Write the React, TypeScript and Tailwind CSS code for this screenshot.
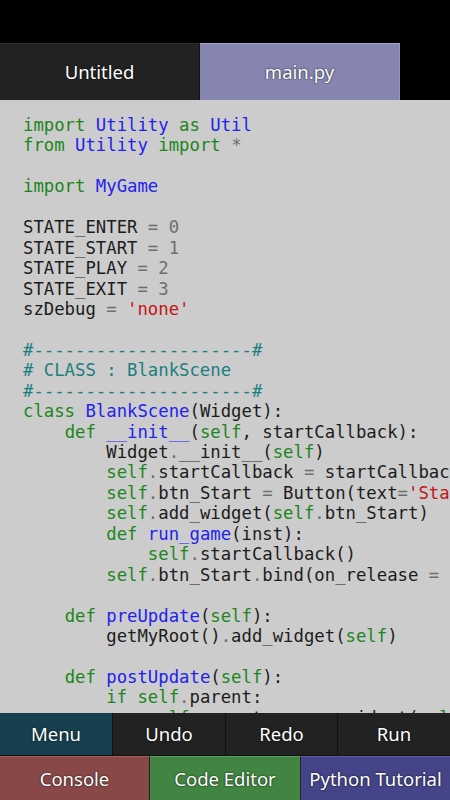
import React from "react";

type Tok = [string, string];
const G = "text-[#1c861c]";
const B = "text-[#2222ee]";
const K = "text-[#1c1c1c]";
const O = "text-[#6e6e6e]";
const C = "text-[#1a7f7f]";
const R = "text-[#c41515]";

const sp = (n: number): Tok => [" ".repeat(n), K];

const lines: Tok[][] = [
  [["import", G], sp(1), ["Utility", B], sp(1), ["as", G], sp(1), ["Util", B]],
  [["from", G], sp(1), ["Utility", B], sp(1), ["import", G], sp(1), ["*", O]],
  [],
  [["import", G], sp(1), ["MyGame", B]],
  [],
  [["STATE_ENTER ", K], ["= 0", O]],
  [["STATE_START ", K], ["= 1", O]],
  [["STATE_PLAY ", K], ["= 2", O]],
  [["STATE_EXIT ", K], ["= 3", O]],
  [["szDebug ", K], ["=", O], sp(1), ["'none'", R]],
  [],
  [["#---------------------#", C]],
  [["# CLASS : BlankScene", C]],
  [["#---------------------#", C]],
  [["class", G], sp(1), ["BlankScene", B], ["(Widget):", K]],
  [sp(4), ["def", G], sp(1), ["__init__", B], ["(", K], ["self", G], [", startCallback):", K]],
  [sp(8), ["Widget", K], [".", O], ["__init__(", K], ["self", G], [")", K]],
  [sp(8), ["self", G], [".", O], ["startCallback ", K], ["=", O], [" startCallback", K]],
  [sp(8), ["self", G], [".", O], ["btn_Start ", K], ["=", O], [" Button(text", K], ["=", O], ["'Start'", R], [")", K]],
  [sp(8), ["self", G], [".", O], ["add_widget(", K], ["self", G], [".", O], ["btn_Start)", K]],
  [sp(8), ["def", G], sp(1), ["run_game", B], ["(inst):", K]],
  [sp(12), ["self", G], [".", O], ["startCallback()", K]],
  [sp(8), ["self", G], [".", O], ["btn_Start", K], [".", O], ["bind(on_release ", K], ["=", O], [" run_game)", K]],
  [],
  [sp(4), ["def", G], sp(1), ["preUpdate", B], ["(", K], ["self", G], ["):", K]],
  [sp(8), ["getMyRoot()", K], [".", O], ["add_widget(", K], ["self", G], [")", K]],
  [],
  [sp(4), ["def", G], sp(1), ["postUpdate", B], ["(", K], ["self", G], ["):", K]],
  [sp(8), ["if", G], sp(1), ["self", G], [".", O], ["parent:", K]],
  [sp(12), ["self", G], [".", O], ["parent", K], [".", O], ["remove_widget(", K], ["self", G], [")", K]],
];

const uiFont = { fontFamily: '"Noto Sans", "Open Sans", sans-serif' };
const shadow = "[text-shadow:0_0_2px_rgba(0,0,0,0.9)]";

export default function App() {
  return (
    <div className="w-[450px] h-[800px] bg-black flex flex-col overflow-hidden" style={uiFont}>
      <div className="h-[43px] shrink-0" />
      <div className="h-[57px] shrink-0 flex">
        <div className={`w-[200px] bg-[#222222] border-t border-[#2e2e2e] border-r border-r-[#111] flex items-center justify-center text-white text-[18.5px] ${shadow}`}>
          Untitled
        </div>
        <div className={`w-[200px] bg-[#8585b0] border-t border-t-[#a4a4c8] border-r border-r-[#9898c0] flex items-center justify-center text-white text-[18.5px] ${shadow}`}>
          main.py
        </div>
      </div>
      <div
        className="flex-1 bg-[#cccccc] overflow-hidden pt-[15px] pl-[23px] text-[17.3px] leading-[20.45px] whitespace-pre"
        style={{ fontFamily: '"DejaVu Sans Mono", "Liberation Mono", monospace' }}
      >
        {lines.map((l, i) => (
          <div key={i} className="h-[20.45px]">
            {l.map(([t, c], j) => (
              <span key={j} className={c}>
                {t}
              </span>
            ))}
          </div>
        ))}
      </div>
      <div className={`h-[43px] shrink-0 flex border-b border-[#111] text-white text-[18.5px] ${shadow}`}>
        <div className="w-[113px] bg-[#16404f] border-r border-[#111] flex items-center justify-center">Menu</div>
        <div className="w-[113px] bg-[#222222] border-r border-[#111] flex items-center justify-center">Undo</div>
        <div className="w-[112px] bg-[#222222] border-r border-[#111] flex items-center justify-center">Redo</div>
        <div className="flex-1 bg-[#222222] flex items-center justify-center">Run</div>
      </div>
      <div className={`h-[44px] shrink-0 flex text-white text-[18.5px] ${shadow}`}>
        <div className="w-[150px] bg-[#884848] border-t border-t-[#a46060] border-r border-r-[#222] flex items-center justify-center">Console</div>
        <div className="w-[151px] bg-[#428442] border-t border-t-[#5a9e5a] border-r border-r-[#222] flex items-center justify-center">Code Editor</div>
        <div className="flex-1 bg-[#444488] border-t border-t-[#5c5ca2] flex items-center justify-center whitespace-nowrap">Python Tutorial</div>
      </div>
    </div>
  );
}
